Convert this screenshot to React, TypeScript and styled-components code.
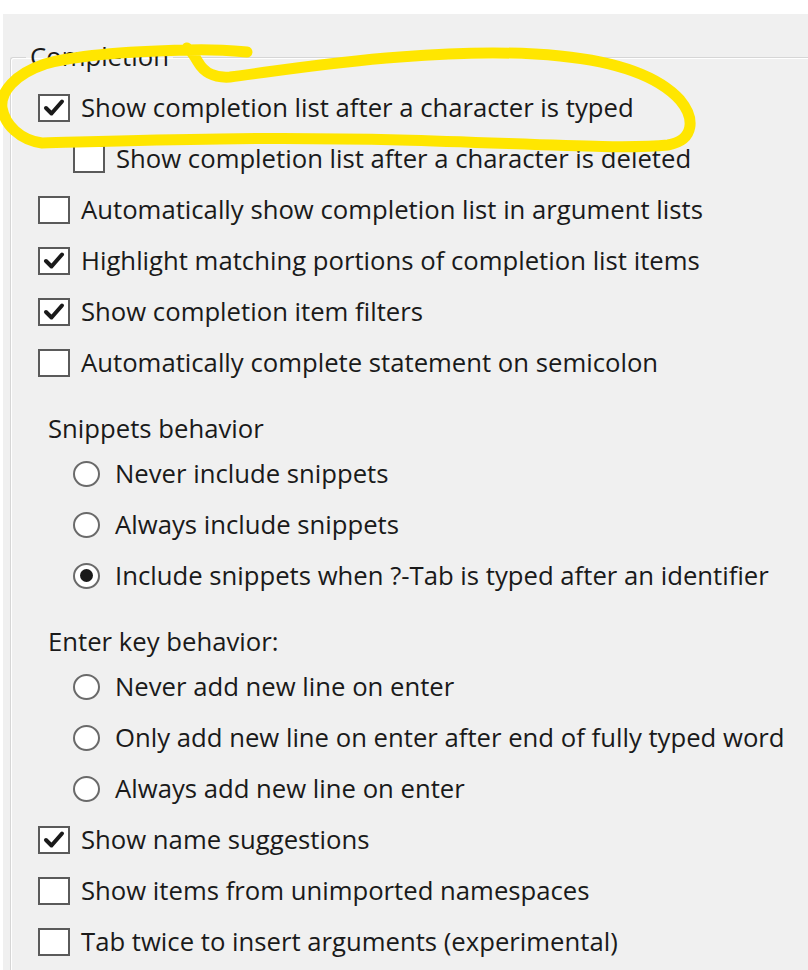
import styled, { createGlobalStyle } from 'styled-components';

const GlobalStyle = createGlobalStyle`
  html, body {
    margin: 0;
    padding: 0;
    background: #ffffff;
  }
  body {
    font-family: 'Open Sans', 'Noto Sans', sans-serif;
    color: #1a1a1a;
  }
`;

const Screen = styled.div`
  position: relative;
  width: 808px;
  height: 970px;
  padding: 14px 0 0 3px;
  box-sizing: border-box;
  overflow: hidden;
`;

const Panel = styled.div`
  height: 956px;
  background: #f0f0f0;
  padding: 28px 0 0 7px;
  box-sizing: border-box;
`;

const GroupBox = styled.fieldset`
  margin: 0;
  padding: 10px 0 0 0;
  border: none;
  border-top: 1px solid #d6d6d6;
  border-left: 1px solid #d6d6d6;
  border-top-left-radius: 3px;
  box-shadow: inset 1px 1px 0 #ffffff;
  height: 940px;
  box-sizing: border-box;
  min-width: 0;
`;

const Legend = styled.legend`
  margin-left: 15px;
  padding: 0 4px;
  font-size: 25.7px;
  line-height: 30px;
`;

const Row = styled.label<{ indent?: number }>`
  display: flex;
  align-items: center;
  height: 51px;
  padding-left: ${({ indent }) => 27 + (indent ?? 0)}px;
  font-size: 25.7px;
  white-space: nowrap;
`;

const Box = styled.span`
  display: inline-flex;
  align-items: center;
  justify-content: center;
  width: 28px;
  height: 24px;
  border: 2px solid #5a5a5a;
  background: #ffffff;
  margin-right: 11px;
  flex-shrink: 0;
`;

const Circle = styled.span`
  display: inline-flex;
  align-items: center;
  justify-content: center;
  width: 23px;
  height: 22px;
  border: 2px solid #6a6a6a;
  border-radius: 50%;
  background: #ffffff;
  margin-right: 15px;
  flex-shrink: 0;
`;

const Dot = styled.span`
  width: 13px;
  height: 13px;
  border-radius: 50%;
  background: #1a1a1a;
`;

const SubHeading = styled.div`
  height: 51px;
  display: flex;
  align-items: center;
  margin: 15px 0 -6px;
  padding-left: 37px;
  font-size: 25.7px;
`;

const Scribble = styled.svg`
  position: absolute;
  left: 0;
  top: 0;
  pointer-events: none;
`;

const Check = ({ checked, indent, children }: { checked?: boolean; indent?: number; children: string }) => (
  <Row indent={indent}>
    <Box>
      {checked && (
        <svg width="22" height="20" viewBox="0 0 22 20">
          <polyline points="3,10 8.5,15.5 19,3.5" fill="none" stroke="#1a1a1a" strokeWidth="4" strokeLinecap="round" strokeLinejoin="round" />
        </svg>
      )}
    </Box>
    {children}
  </Row>
);

const Radio = ({ checked, children }: { checked?: boolean; children: string }) => (
  <Row indent={35}>
    <Circle>{checked && <Dot />}</Circle>
    {children}
  </Row>
);

export default function App() {
  return (
    <>
      <GlobalStyle />
      <Screen>
        <Panel>
          <GroupBox>
            <Legend>Completion</Legend>
            <Check checked>Show completion list after a character is typed</Check>
            <Check indent={35}>Show completion list after a character is deleted</Check>
            <Check>Automatically show completion list in argument lists</Check>
            <Check checked>Highlight matching portions of completion list items</Check>
            <Check checked>Show completion item filters</Check>
            <Check>Automatically complete statement on semicolon</Check>
            <SubHeading>Snippets behavior</SubHeading>
            <Radio>Never include snippets</Radio>
            <Radio>Always include snippets</Radio>
            <Radio checked>Include snippets when ?-Tab is typed after an identifier</Radio>
            <SubHeading>Enter key behavior:</SubHeading>
            <Radio>Never add new line on enter</Radio>
            <Radio>Only add new line on enter after end of fully typed word</Radio>
            <Radio>Always add new line on enter</Radio>
            <Check checked>Show name suggestions</Check>
            <Check>Show items from unimported namespaces</Check>
            <Check>Tab twice to insert arguments (experimental)</Check>
          </GroupBox>
        </Panel>
        <Scribble width="808" height="200" viewBox="0 0 808 200">
          <path
            d="M 247 52 C 225 50, 205 49, 187 50 C 140 51, 80 54, 45 64 C 15 74, 0 92, 2 108 C 5 125, 20 140, 42 143 C 120 141, 250 136, 400 140 C 520 143, 620 150, 668 145 C 695 140, 695 118, 680 100 C 660 78, 620 62, 560 56 C 510 51, 450 53, 400 57 C 330 62, 270 72, 230 77 C 215 78, 205 74, 198 62 C 194 55, 190 50, 187 48"
            fill="none"
            stroke="#ffe600"
            strokeWidth="11"
            strokeLinecap="round"
            strokeLinejoin="round"
          />
        </Scribble>
      </Screen>
    </>
  );
}
